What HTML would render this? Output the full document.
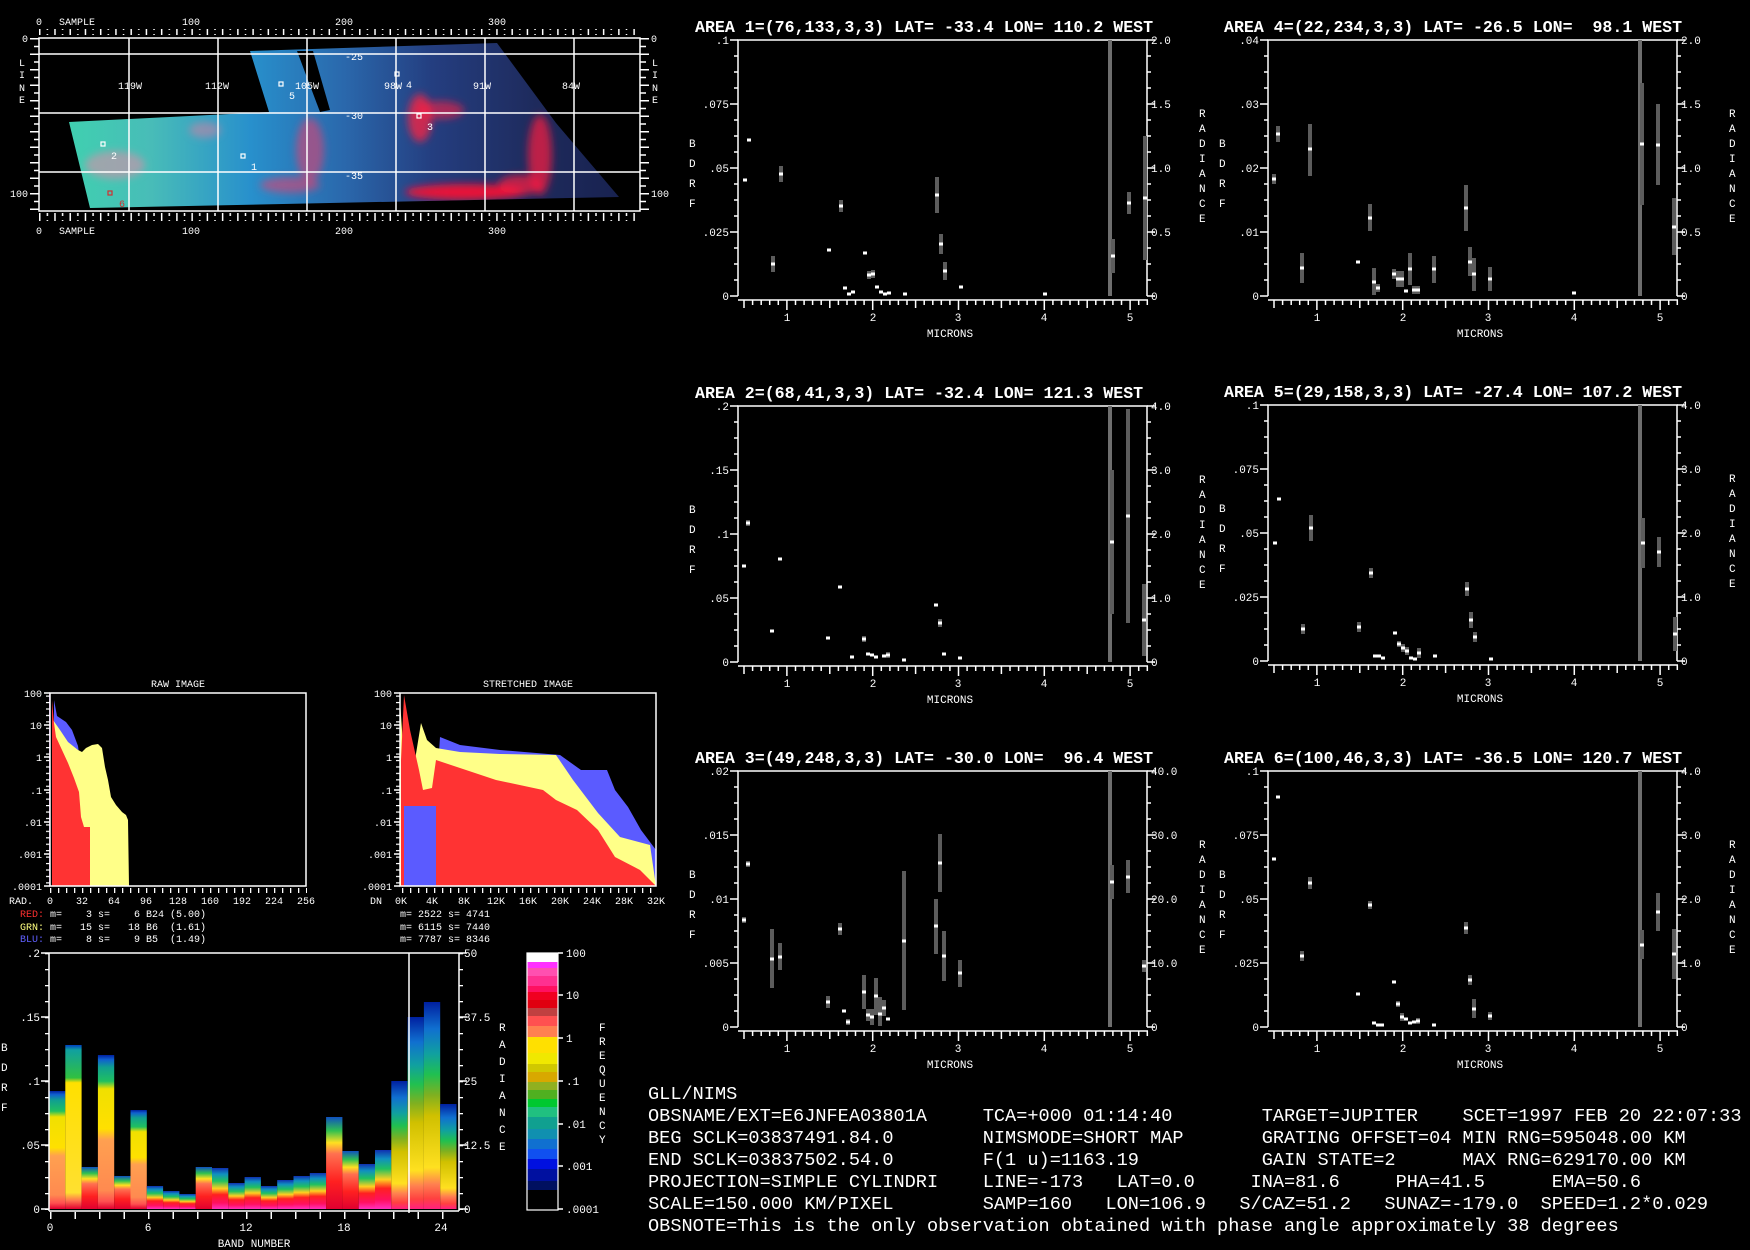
<!DOCTYPE html>
<html><head><meta charset="utf-8">
<style>
html,body{margin:0;padding:0;background:#000;width:1750px;height:1250px;overflow:hidden}
svg{position:absolute;left:0;top:0}
text{font-family:"Liberation Mono",monospace;fill:#fff}
.s{font-size:11px}
.t{font-size:16.6px;font-weight:bold}
.m{font-size:10px}
.e{stroke:#5c5c5c;stroke-width:4;fill:none}
.b{stroke:#6e6e6e;stroke-width:4;fill:none}
.p{stroke:#fff;stroke-width:3;fill:none}
.ax{stroke:#fff;stroke-width:1.5;fill:none}
pre{position:absolute;left:648px;top:1084px;margin:0;font-family:"Liberation Mono",monospace;font-size:18.6px;line-height:22px;color:#fff}
</style></head><body>
<svg width="1750" height="1250" viewBox="0 0 1750 1250" xmlns="http://www.w3.org/2000/svg">
<defs>
<g id="axes">
<path class="ax" d="M0 256V0H409V256M0 260H410"/>
<path class="ax" d="M-8 0H0M-8 64H0M-8 128H0M-8 192H0M-8 256H0M-4 16H0M-4 32H0M-4 48H0M-4 80H0M-4 96H0M-4 112H0M-4 144H0M-4 160H0M-4 176H0M-4 208H0M-4 224H0M-4 240H0"/>
<path class="ax" d="M409 0H417M409 64H417M409 128H417M409 192H417M409 256H417M409 16H413M409 32H413M409 48H413M409 80H413M409 96H413M409 112H413M409 144H413M409 160H413M409 176H413M409 208H413M409 224H413M409 240H413"/>
<path class="ax" d="M6 260v8M14.6 260v5M23.2 260v5M31.7 260v5M40.3 260v5M48.9 260v10M57.5 260v5M66.1 260v5M74.6 260v5M83.2 260v5M91.8 260v8M100.4 260v5M109 260v5M117.5 260v5M126.1 260v5M134.7 260v10M143.3 260v5M151.9 260v5M160.4 260v5M169 260v5M177.6 260v8M186.2 260v5M194.8 260v5M203.3 260v5M211.9 260v5M220.5 260v10M229.1 260v5M237.7 260v5M246.2 260v5M254.8 260v5M263.4 260v8M272 260v5M280.6 260v5M289.1 260v5M297.7 260v5M306.3 260v10M314.9 260v5M323.5 260v5M332 260v5M340.6 260v5M349.2 260v8M357.8 260v5M366.4 260v5M374.9 260v5M383.5 260v5M392.1 260v10M400.7 260v5M409.3 260v5"/>
<path class="b" d="M372 0V256"/>
</g>
<linearGradient id="mapg" x1="69" y1="0" x2="619" y2="0" gradientUnits="userSpaceOnUse">
<stop offset="0" stop-color="#40d0b0"/><stop offset=".15" stop-color="#48bcb8"/><stop offset=".33" stop-color="#2890cc"/><stop offset=".5" stop-color="#2a68ac"/><stop offset=".66" stop-color="#243e80"/><stop offset=".85" stop-color="#1e2a5c"/><stop offset="1" stop-color="#182250"/>
</linearGradient>
<filter id="bl" x="-50%" y="-50%" width="200%" height="200%"><feGaussianBlur stdDeviation="4"/></filter>
<clipPath id="mapc"><path d="M69 122L269 112L250 51L497 43L556 123L619 197L90 208Z"/></clipPath>
<pattern id="tkH" x="39" y="0" width="15.24" height="10" patternUnits="userSpaceOnUse"><rect x="0" y="0" width="1.5" height="10" fill="#fff"/><rect x="7.62" y="4" width="1.5" height="6" fill="#fff"/></pattern>
<pattern id="tkHb" x="39" y="0" width="15.24" height="10" patternUnits="userSpaceOnUse"><rect x="0" y="0" width="1.5" height="10" fill="#fff"/><rect x="7.62" y="0" width="1.5" height="6" fill="#fff"/></pattern>
<pattern id="tkV" x="0" y="38" width="10" height="15.5" patternUnits="userSpaceOnUse"><rect x="0" y="0" width="10" height="1.5" fill="#fff"/><rect x="4" y="7.75" width="6" height="1.5" fill="#fff"/></pattern>
<pattern id="tkVr" x="0" y="38" width="10" height="15.5" patternUnits="userSpaceOnUse"><rect x="0" y="0" width="10" height="1.5" fill="#fff"/><rect x="0" y="7.75" width="6" height="1.5" fill="#fff"/></pattern>
<pattern id="tk8" x="50" y="0" width="8" height="8" patternUnits="userSpaceOnUse"><rect x="0" y="0" width="1.3" height="6" fill="#fff"/></pattern>
<pattern id="tkL" x="0" y="0" width="6" height="6.44" patternUnits="userSpaceOnUse"><rect x="0" y="0" width="6" height="1.2" fill="#fff"/></pattern>
<pattern id="tk16" x="0" y="953" width="6" height="16" patternUnits="userSpaceOnUse"><rect x="0" y="0" width="6" height="1.3" fill="#fff"/></pattern>
<pattern id="tkB" x="50" y="0" width="24.5" height="8" patternUnits="userSpaceOnUse"><rect x="0" y="0" width="1.5" height="8" fill="#fff"/></pattern>
<linearGradient id="gA" x1="0" y1="1" x2="0" y2="0"><stop offset="0" stop-color="#e00030"/><stop offset=".05" stop-color="#ff5050"/><stop offset=".12" stop-color="#ff8a50"/><stop offset=".45" stop-color="#ffa050"/><stop offset=".52" stop-color="#ffe000"/><stop offset=".78" stop-color="#f0e000"/><stop offset=".83" stop-color="#20c060"/><stop offset=".92" stop-color="#10a090"/><stop offset=".97" stop-color="#1060d0"/><stop offset="1" stop-color="#0020a0"/></linearGradient>
<linearGradient id="gY" x1="0" y1="1" x2="0" y2="0"><stop offset="0" stop-color="#e00030"/><stop offset=".05" stop-color="#ff7050"/><stop offset=".1" stop-color="#ffe030"/><stop offset=".77" stop-color="#ffe000"/><stop offset=".8" stop-color="#30c040"/><stop offset=".97" stop-color="#10a0a0"/><stop offset="1" stop-color="#0040c0"/></linearGradient>
<linearGradient id="gL" x1="0" y1="1" x2="0" y2="0"><stop offset="0" stop-color="#ff30c0"/><stop offset=".15" stop-color="#ff1060"/><stop offset=".35" stop-color="#ff2020"/><stop offset=".5" stop-color="#ffd020"/><stop offset=".68" stop-color="#20c060"/><stop offset=".85" stop-color="#1090c0"/><stop offset="1" stop-color="#1030b0"/></linearGradient>
<linearGradient id="gR" x1="0" y1="1" x2="0" y2="0"><stop offset="0" stop-color="#e00030"/><stop offset=".3" stop-color="#ff2020"/><stop offset=".6" stop-color="#ff7050"/><stop offset=".72" stop-color="#ffe020"/><stop offset=".85" stop-color="#30c050"/><stop offset="1" stop-color="#1050c0"/></linearGradient>
<linearGradient id="gH" x1="0" y1="1" x2="0" y2="0"><stop offset="0" stop-color="#ff2080"/><stop offset=".05" stop-color="#ff4040"/><stop offset=".12" stop-color="#ff8050"/><stop offset=".2" stop-color="#ffe020"/><stop offset=".45" stop-color="#d0c000"/><stop offset=".55" stop-color="#80b020"/><stop offset=".65" stop-color="#20c050"/><stop offset=".75" stop-color="#10a0a0"/><stop offset=".87" stop-color="#1070d0"/><stop offset="1" stop-color="#0020a0"/></linearGradient>
</defs>

<!-- MAP -->
<rect x="39" y="29" width="601" height="6" fill="url(#tkH)"/>
<rect x="39" y="213" width="601" height="8" fill="url(#tkHb)"/>
<rect x="30" y="38" width="9" height="174" fill="url(#tkV)"/>
<rect x="640" y="38" width="9" height="174" fill="url(#tkVr)"/>
<path d="M69 122L269 112L250 51L497 43L556 123L619 197L90 208Z" fill="url(#mapg)"/>
<g clip-path="url(#mapc)" filter="url(#bl)">
<ellipse cx="115" cy="165" rx="30" ry="14" fill="#d890a8" opacity=".6"/>
<ellipse cx="205" cy="130" rx="16" ry="8" fill="#e080a0" opacity=".5"/>
<ellipse cx="310" cy="150" rx="14" ry="32" fill="#e04070" opacity=".6"/>
<ellipse cx="290" cy="185" rx="30" ry="8" fill="#e04070" opacity=".6"/>
<ellipse cx="420" cy="118" rx="12" ry="24" fill="#ff2040" opacity=".75"/>
<ellipse cx="440" cy="110" rx="24" ry="9" fill="#ff2040" opacity=".6"/>
<ellipse cx="465" cy="192" rx="60" ry="8" fill="#ff1030" opacity=".9"/>
<ellipse cx="540" cy="155" rx="12" ry="40" fill="#ff1a40" opacity=".7"/>
<ellipse cx="520" cy="185" rx="22" ry="10" fill="#ff1a40" opacity=".7"/>
</g>
<path d="M297 51L313 51L330 110L320 112Z" fill="#000"/>
<g class="ax"><rect x="39" y="38" width="601" height="173"/><path d="M129 38V211M218 38V211M307 38V211M396 38V211M485 38V211M574 38V211M39 54H640M39 113H640M39 172H640"/></g>
<g class="m">
<text x="39" y="25" text-anchor="middle">0</text><text x="59" y="25">SAMPLE</text><text x="191" y="25" text-anchor="middle">100</text><text x="344" y="25" text-anchor="middle">200</text><text x="497" y="25" text-anchor="middle">300</text>
<text x="39" y="234" text-anchor="middle">0</text><text x="59" y="234">SAMPLE</text><text x="191" y="234" text-anchor="middle">100</text><text x="344" y="234" text-anchor="middle">200</text><text x="497" y="234" text-anchor="middle">300</text>
<text x="28" y="42" text-anchor="end">0</text><text x="28" y="197" text-anchor="end">100</text>
<text x="19" y="66">L</text><text x="19" y="78">I</text><text x="19" y="91">N</text><text x="19" y="103">E</text>
<text x="651" y="42">0</text><text x="651" y="197">100</text>
<text x="652" y="66">L</text><text x="652" y="78">I</text><text x="652" y="91">N</text><text x="652" y="103">E</text>
<text x="118" y="89">119W</text><text x="205" y="89">112W</text><text x="295" y="89">105W</text><text x="384" y="89">98W</text><text x="406" y="88">4</text><text x="473" y="89">91W</text><text x="562" y="89">84W</text>
<text x="345" y="60">-25</text><text x="345" y="119">-30</text><text x="345" y="179">-35</text>
<text x="251" y="170">1</text><text x="111" y="159">2</text><text x="427" y="130">3</text><text x="289" y="99">5</text><text x="119" y="207" style="fill:#d03030">6</text>
</g>
<g fill="none" stroke="#fff" stroke-width="1.2"><rect x="241" y="154" width="4" height="4"/><rect x="101" y="142" width="4" height="4"/><rect x="417" y="114" width="4" height="4"/><rect x="395" y="72" width="4" height="4"/><rect x="279" y="82" width="4" height="4"/><rect x="108" y="191" width="4" height="4" stroke="#d03030"/></g>

<!-- HISTOGRAMS -->
<text class="m" x="178" y="687" text-anchor="middle">RAW IMAGE</text>
<text class="m" x="528" y="687" text-anchor="middle">STRETCHED IMAGE</text>
<polygon fill="#5b5bff" points="54,886 54,700 57,716 66,722 72,730 78,746 80,760 82,760 86,886"/>
<polygon fill="#ffff88" points="53,886 53,720 60,730 68,742 78,750 82,752 86,748 92,745 98,744 102,748 105,767 108,780 111,797 116,805 122,812 126,815 128,820 129,886"/>
<polygon fill="#ff3333" points="52,886 52,700 54,723 56,737 62,750 68,763 74,778 79,792 81,817 84,827 90,827 90,886"/>
<rect x="49" y="693" width="1.5" height="193" fill="#a060c0"/>
<polygon fill="#5b5bff" points="404,886 404,810 436,800 440,737 460,745 500,750 560,755 581,770 607,770 615,790 628,807 641,830 656,850 656,886"/>
<polygon fill="#ffff88" points="400,886 400,700 404,760 410,800 415,760 421,723 427,740 436,748 460,752 500,754 556,755 573,780 598,813 620,837 650,845 656,886"/>
<polygon fill="#ff3333" points="401,886 401,760 404,695 410,730 419,770 423,790 432,788 436,760 460,768 496,780 543,790 556,800 577,810 598,830 615,857 640,870 656,886"/>
<rect x="404" y="806" width="32" height="80" fill="#5b5bff"/>
<g class="ax"><rect x="50" y="693" width="256" height="193"/><rect x="400" y="693" width="256" height="193"/>
<path d="M44 693H50M44 725H50M44 757H50M44 790H50M44 822H50M44 854H50M44 886H50M394 693H400M394 725H400M394 757H400M394 790H400M394 822H400M394 854H400M394 886H400"/></g>
<rect x="46" y="693" width="4" height="193" fill="url(#tkL)"/>
<rect x="396" y="693" width="4" height="193" fill="url(#tkL)"/>
<rect x="50" y="887" width="257" height="6" fill="url(#tk8)"/>
<rect x="400" y="887" width="257" height="6" fill="url(#tk8)"/>
<g class="m">
<text x="42" y="697" text-anchor="end">100</text><text x="42" y="729" text-anchor="end">10</text><text x="42" y="761" text-anchor="end">1</text><text x="42" y="794" text-anchor="end">.1</text><text x="42" y="826" text-anchor="end">.01</text><text x="42" y="858" text-anchor="end">.001</text><text x="42" y="890" text-anchor="end">.0001</text>
<text x="392" y="697" text-anchor="end">100</text><text x="392" y="729" text-anchor="end">10</text><text x="392" y="761" text-anchor="end">1</text><text x="392" y="794" text-anchor="end">.1</text><text x="392" y="826" text-anchor="end">.01</text><text x="392" y="858" text-anchor="end">.001</text><text x="392" y="890" text-anchor="end">.0001</text>
<text x="9" y="904">RAD.</text>
<text x="50" y="904" text-anchor="middle">0</text><text x="82" y="904" text-anchor="middle">32</text><text x="114" y="904" text-anchor="middle">64</text><text x="146" y="904" text-anchor="middle">96</text><text x="178" y="904" text-anchor="middle">128</text><text x="210" y="904" text-anchor="middle">160</text><text x="242" y="904" text-anchor="middle">192</text><text x="274" y="904" text-anchor="middle">224</text><text x="306" y="904" text-anchor="middle">256</text>
<text x="370" y="904">DN</text>
<text x="401" y="904" text-anchor="middle">0K</text><text x="432" y="904" text-anchor="middle">4K</text><text x="464" y="904" text-anchor="middle">8K</text><text x="496" y="904" text-anchor="middle">12K</text><text x="528" y="904" text-anchor="middle">16K</text><text x="560" y="904" text-anchor="middle">20K</text><text x="592" y="904" text-anchor="middle">24K</text><text x="624" y="904" text-anchor="middle">28K</text><text x="656" y="904" text-anchor="middle">32K</text>
<text x="20" y="917" xml:space="preserve"><tspan style="fill:#ff3030">RED:</tspan> m=    3 s=    6 B24 (5.00)</text>
<text x="20" y="930" xml:space="preserve"><tspan style="fill:#ffff80">GRN:</tspan> m=   15 s=   18 B6  (1.61)</text>
<text x="20" y="942" xml:space="preserve"><tspan style="fill:#6060ff">BLU:</tspan> m=    8 s=    9 B5  (1.49)</text>
<text x="400" y="917">m= 2522 s= 4741</text>
<text x="400" y="930">m= 6115 s= 7440</text>
<text x="400" y="942">m= 7787 s= 8346</text>
</g>

<!-- BAND PLOT -->
<g>
<rect x="49" y="1091" width="16.3" height="118" fill="url(#gA)"/>
<rect x="65.3" y="1045" width="16.3" height="164" fill="url(#gY)"/>
<rect x="81.6" y="1167" width="16.3" height="42" fill="url(#gR)"/>
<rect x="97.9" y="1055" width="16.3" height="154" fill="url(#gA)"/>
<rect x="114.2" y="1176" width="16.3" height="33" fill="url(#gR)"/>
<rect x="130.5" y="1110" width="16.3" height="99" fill="url(#gA)"/>
<rect x="146.8" y="1186" width="16.3" height="23" fill="url(#gL)"/>
<rect x="163.1" y="1191" width="16.3" height="18" fill="url(#gL)"/>
<rect x="179.4" y="1194" width="16.3" height="15" fill="url(#gL)"/>
<rect x="195.7" y="1167" width="16.3" height="42" fill="url(#gR)"/>
<rect x="212" y="1168" width="16.3" height="41" fill="url(#gL)"/>
<rect x="228.3" y="1183" width="16.3" height="26" fill="url(#gL)"/>
<rect x="244.6" y="1177" width="16.3" height="32" fill="url(#gL)"/>
<rect x="260.9" y="1186" width="16.3" height="23" fill="url(#gL)"/>
<rect x="277.2" y="1180" width="16.3" height="29" fill="url(#gL)"/>
<rect x="293.5" y="1176" width="16.3" height="33" fill="url(#gL)"/>
<rect x="309.8" y="1173" width="16.3" height="36" fill="url(#gL)"/>
<rect x="326.1" y="1117" width="16.3" height="92" fill="url(#gR)"/>
<rect x="342.4" y="1151" width="16.3" height="58" fill="url(#gR)"/>
<rect x="358.7" y="1164" width="16.3" height="45" fill="url(#gL)"/>
<rect x="375" y="1150" width="16.3" height="59" fill="url(#gL)"/>
<rect x="391.3" y="1081" width="16.3" height="128" fill="url(#gH)"/>
<rect x="407.6" y="1017" width="16.3" height="192" fill="url(#gH)"/>
<rect x="423.9" y="1002" width="16.3" height="207" fill="url(#gH)"/>
<rect x="440.2" y="1104" width="16.3" height="105" fill="url(#gH)"/>
</g>
<g class="ax"><path d="M49 953H459M49 953V1211M459 953V1211M409 953V1213M49 1211H459"/>
<path d="M41 953H49M41 1017H49M41 1081H49M41 1145H49M41 1209H49M459 953H467M459 1017H467M459 1081H467M459 1145H467M459 1209H467"/></g>
<rect x="45" y="953" width="4" height="257" fill="url(#tk16)"/>
<rect x="459" y="953" width="4" height="257" fill="url(#tk16)"/>
<rect x="49" y="1212" width="400" height="7" fill="url(#tkB)"/>
<g class="s">
<text x="40" y="957" text-anchor="end">.2</text><text x="40" y="1021" text-anchor="end">.15</text><text x="40" y="1085" text-anchor="end">.1</text><text x="40" y="1149" text-anchor="end">.05</text><text x="40" y="1213" text-anchor="end">0</text>
<text x="464" y="957">50</text><text x="464" y="1021">37.5</text><text x="464" y="1085">25</text><text x="464" y="1149">12.5</text><text x="464" y="1213">0</text>
<text x="1" y="1051">B</text><text x="1" y="1071">D</text><text x="1" y="1091">R</text><text x="1" y="1111">F</text>
<text x="499" y="1031">R</text><text x="499" y="1048">A</text><text x="499" y="1065">D</text><text x="499" y="1082">I</text><text x="499" y="1099">A</text><text x="499" y="1116">N</text><text x="499" y="1133">C</text><text x="499" y="1150">E</text>
<text x="50" y="1231" text-anchor="middle">0</text><text x="148" y="1231" text-anchor="middle">6</text><text x="246" y="1231" text-anchor="middle">12</text><text x="344" y="1231" text-anchor="middle">18</text><text x="441" y="1231" text-anchor="middle">24</text>
<text x="254" y="1247" text-anchor="middle">BAND NUMBER</text>
</g>
<!-- colorbar -->
<g>
<rect x="527" y="953" width="31" height="9" fill="#fff"/>
<rect x="527" y="962" width="31" height="6" fill="#ff30ff"/>
<rect x="527" y="968" width="31" height="8" fill="#ff50b0"/>
<rect x="527" y="976" width="31" height="10" fill="#ff3090"/>
<rect x="527" y="986" width="31" height="6" fill="#ff1060"/>
<rect x="527" y="992" width="31" height="8" fill="#f00020"/>
<rect x="527" y="1000" width="31" height="8" fill="#e00010"/>
<rect x="527" y="1008" width="31" height="8" fill="#c04040"/>
<rect x="527" y="1016" width="31" height="10" fill="#ff5050"/>
<rect x="527" y="1026" width="31" height="11" fill="#ff8050"/>
<rect x="527" y="1037" width="31" height="16" fill="#ffe000"/>
<rect x="527" y="1053" width="31" height="11" fill="#f0e800"/>
<rect x="527" y="1064" width="31" height="8" fill="#d0c800"/>
<rect x="527" y="1072" width="31" height="10" fill="#d8a800"/>
<rect x="527" y="1082" width="31" height="8" fill="#90b020"/>
<rect x="527" y="1090" width="31" height="9" fill="#50b020"/>
<rect x="527" y="1099" width="31" height="8" fill="#00c830"/>
<rect x="527" y="1107" width="31" height="10" fill="#20c080"/>
<rect x="527" y="1117" width="31" height="12" fill="#10a090"/>
<rect x="527" y="1129" width="31" height="10" fill="#1090b0"/>
<rect x="527" y="1139" width="31" height="10" fill="#1070d0"/>
<rect x="527" y="1149" width="31" height="10" fill="#1050f0"/>
<rect x="527" y="1159" width="31" height="10" fill="#0010e0"/>
<rect x="527" y="1169" width="31" height="12" fill="#0010a0"/>
<rect x="527" y="1181" width="31" height="9" fill="#001060"/>
<rect x="527" y="1190" width="31" height="20" fill="#000"/>
<rect x="527" y="953" width="31" height="257" fill="none" stroke="#fff" stroke-width="1.2"/>
<path class="ax" d="M558 953h5M558 995h5M558 1038h5M558 1081h5M558 1124h5M558 1166h5M558 1209h5"/>
</g>
<g class="s">
<text x="566" y="957">100</text><text x="566" y="999">10</text><text x="566" y="1042">1</text><text x="566" y="1085">.1</text><text x="566" y="1128">.01</text><text x="566" y="1170">.001</text><text x="566" y="1213">.0001</text>
<text x="599" y="1031">F</text><text x="599" y="1045">R</text><text x="599" y="1059">E</text><text x="599" y="1073">Q</text><text x="599" y="1087">U</text><text x="599" y="1101">E</text><text x="599" y="1115">N</text><text x="599" y="1129">C</text><text x="599" y="1143">Y</text>
</g>

<!-- AREA PLOTS -->
<g transform="translate(738,40)">
<use href="#axes"/>
<path class="e" d="M35 216V232M43 126V142M103 160V172M131 231V239M135 230V238M199 137V173M203 194V214M207 222V240M375 199V233M391 152V174M407 96V220"/>
<path class="p" d="M5 140h4M9 100h4M33 224h4M41 134h4M89 210h4M101 166h4M105 248h4M109 254h4M113 252h4M125 213h4M129 235h4M133 234h4M137 247h4M141 252h4M145 254h4M149 253h4M165 254h4M197 155h4M201 204h4M205 231h4M221 247h4M305 254h4M373 216h4M389 163h4M405 158h4"/>
<text class="t" x="-43" y="-8" xml:space="preserve">AREA 1=(76,133,3,3) LAT= -33.4 LON= 110.2 WEST</text>
<g class="s"><text x="-9" y="4" text-anchor="end">.1</text><text x="-9" y="68" text-anchor="end">.075</text><text x="-9" y="132" text-anchor="end">.05</text><text x="-9" y="196" text-anchor="end">.025</text><text x="-9" y="260" text-anchor="end">0</text>
<text x="413" y="4">2.0</text><text x="413" y="68">1.5</text><text x="413" y="132">1.0</text><text x="413" y="196">0.5</text><text x="413" y="260">0</text>
<text x="49" y="281" text-anchor="middle">1</text><text x="135" y="281" text-anchor="middle">2</text><text x="220" y="281" text-anchor="middle">3</text><text x="306" y="281" text-anchor="middle">4</text><text x="392" y="281" text-anchor="middle">5</text><text x="212" y="297" text-anchor="middle">MICRONS</text>
<text x="-49" y="107">B</text><text x="-49" y="127">D</text><text x="-49" y="147">R</text><text x="-49" y="167">F</text>
<text x="461" y="77">R</text><text x="461" y="92">A</text><text x="461" y="107">D</text><text x="461" y="122">I</text><text x="461" y="137">A</text><text x="461" y="152">N</text><text x="461" y="167">C</text><text x="461" y="182">E</text></g>
</g>

<g transform="translate(738,406)">
<use href="#axes"/>
<path class="e" d="M10 114V120M126 230V236M150 246V252M374 64V208M390 3V217M406 178V250M202 213V221"/>
<path class="p" d="M4 160h4M8 117h4M32 225h4M40 153h4M88 232h4M100 181h4M112 251h4M124 233h4M128 248h4M132 249h4M136 251h4M144 250h4M148 249h4M164 254h4M196 199h4M200 217h4M204 248h4M220 252h4M372 136h4M388 110h4M404 214h4"/>
<text class="t" x="-43" y="-8" xml:space="preserve">AREA 2=(68,41,3,3) LAT= -32.4 LON= 121.3 WEST</text>
<g class="s"><text x="-9" y="4" text-anchor="end">.2</text><text x="-9" y="68" text-anchor="end">.15</text><text x="-9" y="132" text-anchor="end">.1</text><text x="-9" y="196" text-anchor="end">.05</text><text x="-9" y="260" text-anchor="end">0</text>
<text x="413" y="4">4.0</text><text x="413" y="68">3.0</text><text x="413" y="132">2.0</text><text x="413" y="196">1.0</text><text x="413" y="260">0</text>
<text x="49" y="281" text-anchor="middle">1</text><text x="135" y="281" text-anchor="middle">2</text><text x="220" y="281" text-anchor="middle">3</text><text x="306" y="281" text-anchor="middle">4</text><text x="392" y="281" text-anchor="middle">5</text><text x="212" y="297" text-anchor="middle">MICRONS</text>
<text x="-49" y="107">B</text><text x="-49" y="127">D</text><text x="-49" y="147">R</text><text x="-49" y="167">F</text>
<text x="461" y="77">R</text><text x="461" y="92">A</text><text x="461" y="107">D</text><text x="461" y="122">I</text><text x="461" y="137">A</text><text x="461" y="152">N</text><text x="461" y="167">C</text><text x="461" y="182">E</text></g>
</g>

<g transform="translate(738,771)">
<use href="#axes"/>
<path class="e" d="M6 146V152M10 90V96M34 158V217M42 172V199M90 225V237M102 152V164M110 248V254M126 204V238M130 238V250M134 238V254M138 207V244M142 226V255M146 229V245M166 100V239M198 128V183M202 63V121M206 160V210M222 189V216M374 94V128M390 89V122M406 189V201"/>
<path class="p" d="M4 149h4M8 93h4M32 188h4M40 186h4M88 231h4M100 158h4M104 240h4M108 251h4M124 221h4M128 244h4M132 246h4M136 225h4M140 243h4M144 237h4M148 248h4M164 170h4M196 155h4M200 92h4M204 185h4M220 202h4M372 111h4M388 106h4M404 195h4"/>
<text class="t" x="-43" y="-8" xml:space="preserve">AREA 3=(49,248,3,3) LAT= -30.0 LON=  96.4 WEST</text>
<g class="s"><text x="-9" y="4" text-anchor="end">.02</text><text x="-9" y="68" text-anchor="end">.015</text><text x="-9" y="132" text-anchor="end">.01</text><text x="-9" y="196" text-anchor="end">.005</text><text x="-9" y="260" text-anchor="end">0</text>
<text x="413" y="4">40.0</text><text x="413" y="68">30.0</text><text x="413" y="132">20.0</text><text x="413" y="196">10.0</text><text x="413" y="260">0</text>
<text x="49" y="281" text-anchor="middle">1</text><text x="135" y="281" text-anchor="middle">2</text><text x="220" y="281" text-anchor="middle">3</text><text x="306" y="281" text-anchor="middle">4</text><text x="392" y="281" text-anchor="middle">5</text><text x="212" y="297" text-anchor="middle">MICRONS</text>
<text x="-49" y="107">B</text><text x="-49" y="127">D</text><text x="-49" y="147">R</text><text x="-49" y="167">F</text>
<text x="461" y="77">R</text><text x="461" y="92">A</text><text x="461" y="107">D</text><text x="461" y="122">I</text><text x="461" y="137">A</text><text x="461" y="152">N</text><text x="461" y="167">C</text><text x="461" y="182">E</text></g>
</g>

<g transform="translate(1268,40)">
<use href="#axes"/>
<path class="e" d="M6 134V144M10 86V102M34 213V243M42 84V136M102 164V191M106 228V255M110 244V252M126 229V239M130 231V247M134 231V247M142 213V245M146 246V254M150 246V254M166 216V243M198 145V191M202 207V236M206 218V251M222 227V251M374 43V165M390 64V145M406 158V215"/>
<path class="p" d="M4 139h4M8 94h4M32 228h4M40 109h4M88 222h4M100 178h4M104 242h4M108 248h4M124 234h4M128 239h4M132 239h4M136 251h4M140 229h4M144 250h4M148 250h4M164 229h4M196 168h4M200 222h4M204 234h4M220 239h4M304 253h4M372 104h4M388 105h4M404 187h4"/>
<text class="t" x="-44" y="-8" xml:space="preserve">AREA 4=(22,234,3,3) LAT= -26.5 LON=  98.1 WEST</text>
<g class="s"><text x="-9" y="4" text-anchor="end">.04</text><text x="-9" y="68" text-anchor="end">.03</text><text x="-9" y="132" text-anchor="end">.02</text><text x="-9" y="196" text-anchor="end">.01</text><text x="-9" y="260" text-anchor="end">0</text>
<text x="413" y="4">2.0</text><text x="413" y="68">1.5</text><text x="413" y="132">1.0</text><text x="413" y="196">0.5</text><text x="413" y="260">0</text>
<text x="49" y="281" text-anchor="middle">1</text><text x="135" y="281" text-anchor="middle">2</text><text x="220" y="281" text-anchor="middle">3</text><text x="306" y="281" text-anchor="middle">4</text><text x="392" y="281" text-anchor="middle">5</text><text x="212" y="297" text-anchor="middle">MICRONS</text>
<text x="-49" y="107">B</text><text x="-49" y="127">D</text><text x="-49" y="147">R</text><text x="-49" y="167">F</text>
<text x="461" y="77">R</text><text x="461" y="92">A</text><text x="461" y="107">D</text><text x="461" y="122">I</text><text x="461" y="137">A</text><text x="461" y="152">N</text><text x="461" y="167">C</text><text x="461" y="182">E</text></g>
</g>

<g transform="translate(1268,405)">
<use href="#axes"/>
<path class="e" d="M35 219V229M43 110V136M91 217V227M103 163V173M131 236V242M135 239V247M139 242V250M151 243V253M199 177V191M203 207V223M207 227V237M375 113V163M391 132V162M407 212V246"/>
<path class="p" d="M5 138h4M9 94h4M33 224h4M41 123h4M89 222h4M101 168h4M105 251h4M109 251h4M113 253h4M125 228h4M129 239h4M133 243h4M137 246h4M141 253h4M145 254h4M149 248h4M165 251h4M197 184h4M201 215h4M205 232h4M221 254h4M373 138h4M389 147h4M405 229h4"/>
<text class="t" x="-44" y="-8" xml:space="preserve">AREA 5=(29,158,3,3) LAT= -27.4 LON= 107.2 WEST</text>
<g class="s"><text x="-9" y="4" text-anchor="end">.1</text><text x="-9" y="68" text-anchor="end">.075</text><text x="-9" y="132" text-anchor="end">.05</text><text x="-9" y="196" text-anchor="end">.025</text><text x="-9" y="260" text-anchor="end">0</text>
<text x="413" y="4">4.0</text><text x="413" y="68">3.0</text><text x="413" y="132">2.0</text><text x="413" y="196">1.0</text><text x="413" y="260">0</text>
<text x="49" y="281" text-anchor="middle">1</text><text x="135" y="281" text-anchor="middle">2</text><text x="220" y="281" text-anchor="middle">3</text><text x="306" y="281" text-anchor="middle">4</text><text x="392" y="281" text-anchor="middle">5</text><text x="212" y="297" text-anchor="middle">MICRONS</text>
<text x="-49" y="107">B</text><text x="-49" y="127">D</text><text x="-49" y="147">R</text><text x="-49" y="167">F</text>
<text x="461" y="77">R</text><text x="461" y="92">A</text><text x="461" y="107">D</text><text x="461" y="122">I</text><text x="461" y="137">A</text><text x="461" y="152">N</text><text x="461" y="167">C</text><text x="461" y="182">E</text></g>
</g>

<g transform="translate(1268,771)">
<use href="#axes"/>
<path class="e" d="M34 180V190M42 106V118M102 130V138M130 230V236M134 242V250M150 247V253M198 151V163M202 204V214M206 228V247M222 241V249M374 159V188M390 122V160M406 158V208"/>
<path class="p" d="M4 88h4M8 26h4M32 185h4M40 112h4M88 223h4M100 134h4M104 252h4M108 254h4M112 254h4M124 211h4M128 233h4M132 246h4M136 248h4M140 252h4M144 251h4M148 250h4M164 254h4M196 157h4M200 209h4M204 238h4M220 245h4M372 174h4M388 141h4M404 183h4"/>
<text class="t" x="-44" y="-8" xml:space="preserve">AREA 6=(100,46,3,3) LAT= -36.5 LON= 120.7 WEST</text>
<g class="s"><text x="-9" y="4" text-anchor="end">.1</text><text x="-9" y="68" text-anchor="end">.075</text><text x="-9" y="132" text-anchor="end">.05</text><text x="-9" y="196" text-anchor="end">.025</text><text x="-9" y="260" text-anchor="end">0</text>
<text x="413" y="4">4.0</text><text x="413" y="68">3.0</text><text x="413" y="132">2.0</text><text x="413" y="196">1.0</text><text x="413" y="260">0</text>
<text x="49" y="281" text-anchor="middle">1</text><text x="135" y="281" text-anchor="middle">2</text><text x="220" y="281" text-anchor="middle">3</text><text x="306" y="281" text-anchor="middle">4</text><text x="392" y="281" text-anchor="middle">5</text><text x="212" y="297" text-anchor="middle">MICRONS</text>
<text x="-49" y="107">B</text><text x="-49" y="127">D</text><text x="-49" y="147">R</text><text x="-49" y="167">F</text>
<text x="461" y="77">R</text><text x="461" y="92">A</text><text x="461" y="107">D</text><text x="461" y="122">I</text><text x="461" y="137">A</text><text x="461" y="152">N</text><text x="461" y="167">C</text><text x="461" y="182">E</text></g>
</g>
</svg>
<pre>GLL/NIMS
OBSNAME/EXT=E6JNFEA03801A     TCA=+000 01:14:40        TARGET=JUPITER    SCET=1997 FEB 20 22:07:33
BEG SCLK=03837491.84.0        NIMSMODE=SHORT MAP       GRATING OFFSET=04 MIN RNG=595048.00 KM
END SCLK=03837502.54.0        F(1 u)=1163.19           GAIN STATE=2      MAX RNG=629170.00 KM
PROJECTION=SIMPLE CYLINDRI    LINE=-173   LAT=0.0     INA=81.6     PHA=41.5      EMA=50.6
SCALE=150.000 KM/PIXEL        SAMP=160   LON=106.9   S/CAZ=51.2   SUNAZ=-179.0  SPEED=1.2*0.029
OBSNOTE=This is the only observation obtained with phase angle approximately 38 degrees</pre>
</body></html>
